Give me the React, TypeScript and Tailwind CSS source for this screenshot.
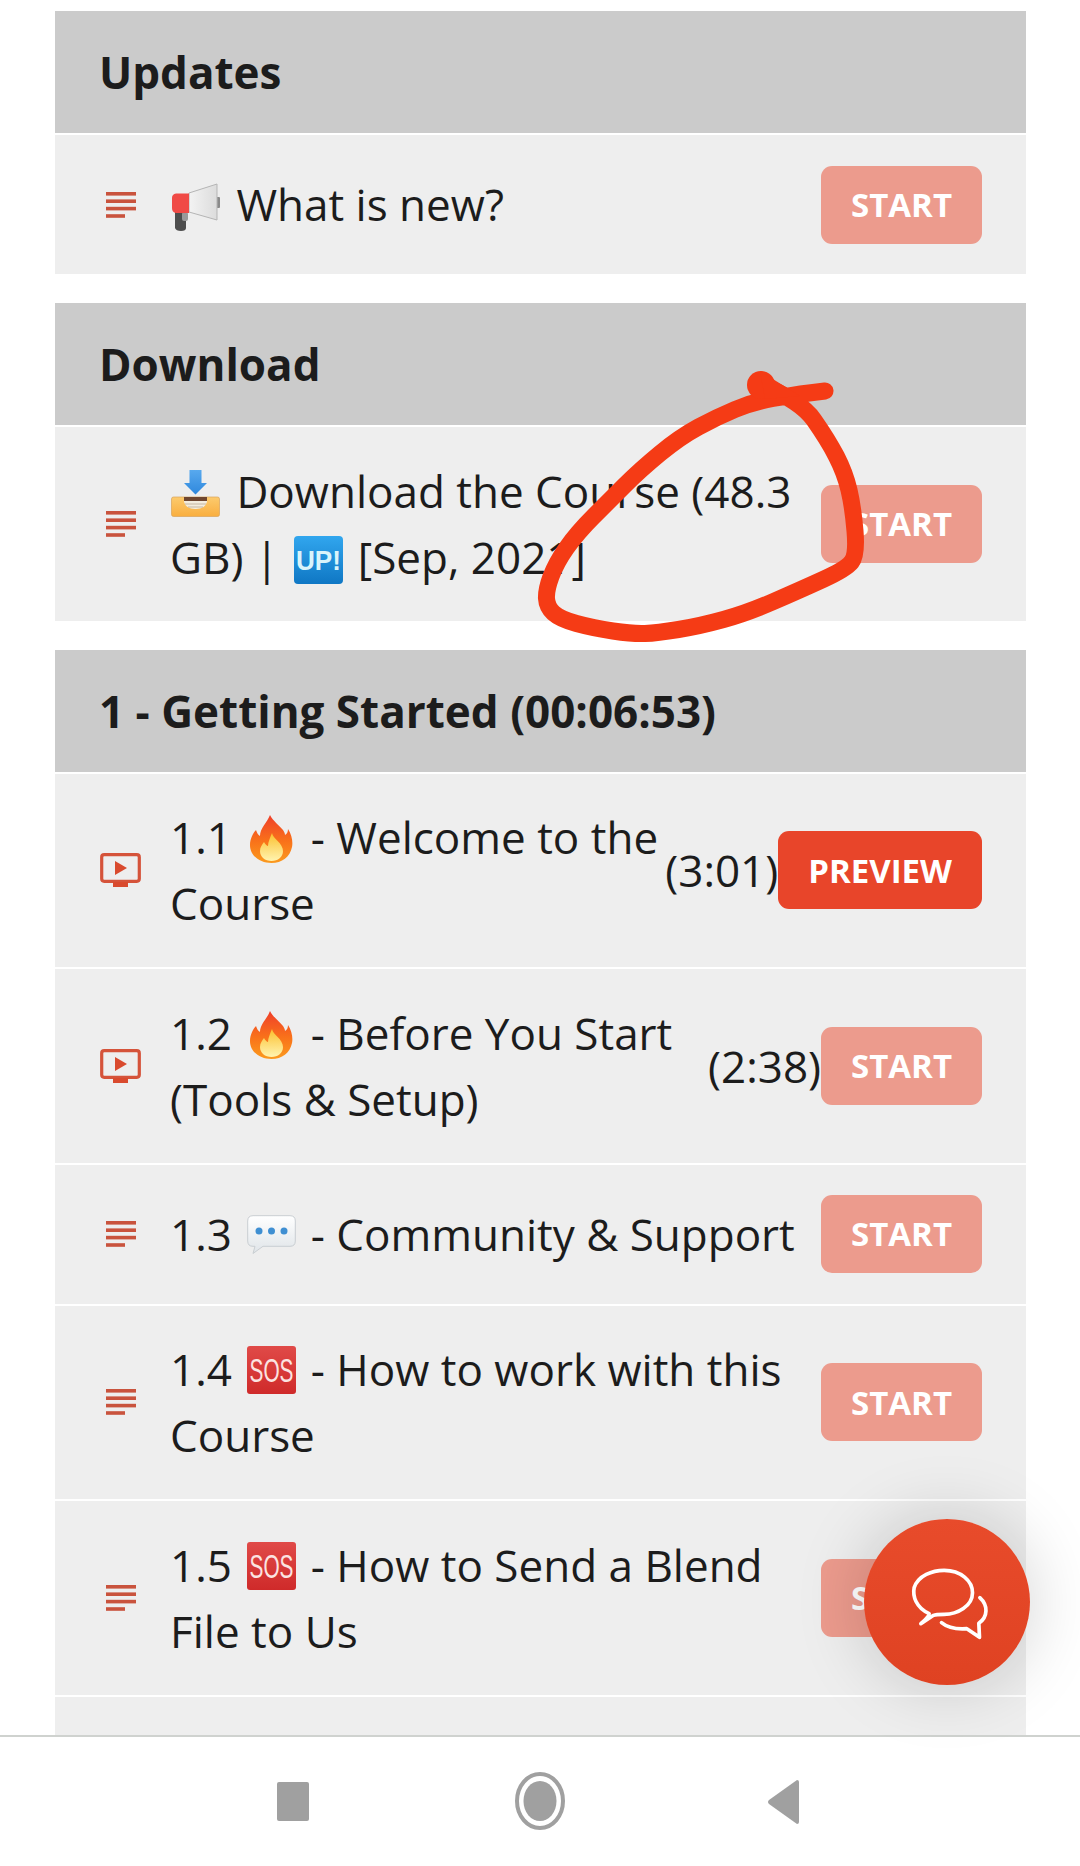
import React from "react";

const FONT = "font-['Open_Sans','Noto_Sans',sans-serif]";

const Megaphone = () => (
  <svg viewBox="0 0 50 48" className="inline-block align-[-10px] w-[50px] h-[48px] ml-[1px] mr-[4px]">
    <defs>
      <linearGradient id="mg" x1="0" y1="0" x2="1" y2="0"><stop offset="0" stopColor="#f3f3f3" /><stop offset="1" stopColor="#dcdcdc" /></linearGradient>
    </defs>
    <path d="M4 27 H16 V34 L15 36 V45 Q15 48 10 48 Q5 48 4 45 Z" fill="#4d4d4d" />
    <rect x="11" y="29" width="6" height="9" rx="2" fill="#9a9a9a" />
    <rect x="45" y="14" width="4" height="11" rx="1" fill="#8a8a8a" />
    <path d="M18 10 L46 1 V37 L18 29 Z" fill="url(#mg)" stroke="#b5b5b5" strokeWidth="1" />
    <path d="M5 10.5 H18 V30 H5 Q1 29.5 1 25 V15 Q1 11 5 10.5 Z" fill="#f04a46" />
  </svg>
);

const Tray = () => (
  <svg viewBox="0 0 49 47" className="inline-block align-[-9px] w-[49px] h-[47px] ml-[1px] mr-[5px]">
    <defs>
      <linearGradient id="tr" x1="0" y1="0" x2="0" y2="1"><stop offset="0" stopColor="#fccb6e" /><stop offset="1" stopColor="#f9ae3f" /></linearGradient>
      <linearGradient id="ar" x1="0" y1="0" x2="0" y2="1"><stop offset="0" stopColor="#58a9ee" /><stop offset="1" stopColor="#2f88dd" /></linearGradient>
    </defs>
    <rect x="0.5" y="27" width="48" height="19.5" rx="2" fill="url(#tr)" stroke="#d9a45a" strokeWidth="0.7" />
    <path d="M13 27 H36 V32 Q34 39 25 39 H24 Q15 39 13 32 Z" fill="#f3ecdd" />
    <path d="M13 27 H36 V31 H13 Z" fill="#6e4630" />
    <path d="M14 34 H35 M17 37 H32" stroke="#b9aa96" strokeWidth="0.8" />
    <path d="M18.5 0 H30.5 V13 H36 L24.5 24.5 L13 13 H18.5 Z" fill="url(#ar)" />
  </svg>
);

const Up = () => (
  <svg viewBox="0 0 49 48" className="inline-block align-[-10px] w-[49px] h-[48px] ml-[4px] mr-[3px]">
    <defs>
      <linearGradient id="up" x1="0" y1="0" x2="0" y2="1"><stop offset="0" stopColor="#31a6ee" /><stop offset="1" stopColor="#0f77c4" /></linearGradient>
    </defs>
    <rect x="0" y="0" width="49" height="48" rx="4" fill="url(#up)" />
    <text x="2" y="34" fontFamily="'Liberation Sans',sans-serif" fontWeight="700" fontSize="27" fill="#d9f4fb" textLength="45" lengthAdjust="spacingAndGlyphs">UP!</text>
  </svg>
);

const Fire = () => (
  <svg viewBox="0 0 49 48" className="inline-block align-[-9px] w-[49px] h-[48px] ml-[4px] mr-[3px]">
    <defs>
      <linearGradient id="f1" x1="0" y1="0" x2="0" y2="1"><stop offset="0" stopColor="#ef3f2a" /><stop offset="0.55" stopColor="#f9721a" /><stop offset="1" stopColor="#fb9a1e" /></linearGradient>
      <linearGradient id="f2" x1="0" y1="0" x2="0" y2="1"><stop offset="0" stopColor="#fbbf2d" /><stop offset="1" stopColor="#fff4b0" /></linearGradient>
    </defs>
    <path d="M23 0 C26 6 32 10 36 15 C37 17 38 18 38 20 C40 19 41 17 41 14 C45 20 46 27 45 32 C43 42 35 48 24.5 48 C13 48 3 41 3 30 C3 24 6 18 9 15 C10 18 11 20 13 21 C13 13 20 8 23 0 Z" fill="url(#f1)" />
    <path d="M25 18 C26 24 36 28 36 36 C36 42 31 46 24.5 46 C18 46 13 42 13 36 C13 32 15 30 17 27 C18 29 20 31 21 31 C21 27 23 23 25 18 Z" fill="url(#f2)" />
  </svg>
);

const Bubble = () => (
  <svg viewBox="0 0 49 40" className="inline-block align-[-4px] w-[49px] h-[40px] ml-[4px] mr-[3px]">
    <defs>
      <linearGradient id="bb" x1="0" y1="0" x2="0" y2="1"><stop offset="0" stopColor="#ffffff" /><stop offset="1" stopColor="#dfe4e8" /></linearGradient>
    </defs>
    <path d="M6 0.7 H43 Q48.3 0.7 48.3 6 V26 Q48.3 31.3 43 31.3 H16 L6 38.5 L8 31.3 H6 Q0.7 31.3 0.7 26 V6 Q0.7 0.7 6 0.7 Z" fill="url(#bb)" stroke="#c9ced2" strokeWidth="1" />
    <circle cx="12" cy="16" r="3.5" fill="#3f8fd2" />
    <circle cx="24.5" cy="16" r="3.5" fill="#3f8fd2" />
    <circle cx="37" cy="16" r="3.5" fill="#3f8fd2" />
  </svg>
);

const Sos = () => (
  <svg viewBox="0 0 49 48" className="inline-block align-[-8px] w-[49px] h-[48px] ml-[4px] mr-[3px]">
    <defs>
      <linearGradient id="so" x1="0" y1="0" x2="0" y2="1"><stop offset="0" stopColor="#e04a48" /><stop offset="1" stopColor="#cf2a2a" /></linearGradient>
    </defs>
    <rect width="49" height="48" rx="3" fill="url(#so)" />
    <text x="2.5" y="36" fontFamily="'Liberation Sans',sans-serif" fontWeight="400" fontSize="33" fill="#fbe3e1" textLength="44" lengthAdjust="spacingAndGlyphs">SOS</text>
  </svg>
);

const ListIcon = () => (
  <svg viewBox="0 0 30 26" className="w-[30px] h-[26px]" fill="#c9533d">
    <rect x="0" y="0" width="30" height="3.6" />
    <rect x="0" y="7.4" width="30" height="3.6" />
    <rect x="0" y="14.8" width="30" height="3.6" />
    <rect x="0" y="22.2" width="19" height="3.6" />
  </svg>
);

const VideoIcon = () => (
  <svg viewBox="0 0 41 34" className="w-[41px] h-[34px]">
    <rect x="1.7" y="1.7" width="37.6" height="26.6" rx="2.5" fill="none" stroke="#d5533a" strokeWidth="3.2" />
    <path d="M15 8 L27 15 L15 22 Z" fill="#d94a2e" />
    <rect x="13" y="29" width="15" height="5" fill="#d94a2e" />
  </svg>
);

const Btn = ({ label, active }: { label: string; active?: boolean }) => (
  <div className={`shrink-0 h-[78px] px-[30px] rounded-[11px] flex items-center text-[33px] font-bold text-white ${active ? "bg-[#e8452a]" : "bg-[#ec9b8d]"}`}>
    {label}
  </div>
);

const Row = ({ video, time, active, children }: { video?: boolean; time?: string; active?: boolean; children: React.ReactNode }) => (
  <div className="flex items-center bg-[#eeeeee] pl-[45px] pr-[44px] py-[30.5px]">
    <div className="shrink-0 w-[41px] mr-[29px] flex justify-center">{video ? <VideoIcon /> : <ListIcon />}</div>
    <div className="flex-1 min-w-0 text-[44px] leading-[66.25px]">{children}</div>
    {time && <div className="shrink-0 text-[44px] leading-[66.25px] whitespace-nowrap">{time}</div>}
    <Btn label={active ? "PREVIEW" : "START"} active={active} />
  </div>
);

const Section = ({ title, children }: { title: string; children: React.ReactNode }) => (
  <section className="flex flex-col gap-[2px]">
    <h2 className="h-[122px] bg-[#cbcbcb] pl-[44px] flex items-center text-[44px] font-bold">{title}</h2>
    {children}
  </section>
);

const Scribble = () => {
  const p: [number, number][] = [[757, 383], [800, 400], [828, 440], [845, 473], [853, 507], [857, 555], [846, 569], [800, 590], [747, 613], [700, 626], [657, 633], [633, 634], [593, 628], [560, 619], [547, 607], [546, 590], [556, 563], [577, 533], [610, 500], [640, 470], [680, 437], [717, 417], [753, 402], [793, 395], [825, 391]];
  let d = `M${p[0][0]} ${p[0][1]}`;
  for (let i = 1; i < p.length - 1; i++) {
    d += ` Q${p[i][0]} ${p[i][1]} ${(p[i][0] + p[i + 1][0]) / 2} ${(p[i][1] + p[i + 1][1]) / 2}`;
  }
  d += ` L${p[p.length - 1][0]} ${p[p.length - 1][1]}`;
  return (
    <svg viewBox="0 0 1080 1866" className="absolute inset-0 w-[1080px] h-[1866px] pointer-events-none">
      <path d={d} fill="none" stroke="#f53b15" strokeWidth="17" strokeLinecap="round" strokeLinejoin="round" />
      <circle cx="761" cy="385" r="14" fill="#f53b15" />
      <path d="M760 371 L800 396 L765 399 Z" fill="#f53b15" />
    </svg>
  );
};

const Fab = () => (
  <div className="absolute left-[864px] top-[1519px] w-[166px] h-[166px] rounded-full bg-gradient-to-b from-[#e84b2b] to-[#df4222] shadow-[0_0_70px_rgba(0,0,0,0.18)] flex items-center justify-center">
    <svg viewBox="385 260 245 225" className="w-[82px] h-[75px] ml-[6px] mt-[3px]" fill="none" stroke="#fff" strokeWidth="11" strokeLinejoin="round" strokeLinecap="round">
      <path d="M445 403 C405 385 395 350 400 325 C412 288 455 273 490 273 C540 273 575 305 575 340 C575 380 530 405 490 405 C475 405 465 405 458 408 L420 433 C435 420 445 410 445 403 Z" />
      <path d="M597 355 C622 378 622 412 594 432 L596 474 L558 448 C530 450 500 445 482 430" />
    </svg>
  </div>
);

export default function App() {
  return (
    <div className={`relative w-[1080px] h-[1866px] overflow-hidden bg-white text-[#1c1c1c] flex flex-col ${FONT}`}>
      <main className="h-[1735px] overflow-hidden pl-[55px] pr-[54px] pt-[11px] flex flex-col gap-[29px]">
        <Section title="Updates">
          <Row><Megaphone /> What is new?</Row>
        </Section>
        <Section title="Download">
          <Row><Tray /> Download the Course (48.3 GB) | <Up /> [Sep, 2021]</Row>
        </Section>
        <Section title="1 - Getting Started (00:06:53)">
          <Row video time="(3:01)" active>1.1 <Fire /> - Welcome to the Course</Row>
          <Row video time="(2:38)">1.2 <Fire /> - Before You Start (Tools &amp; Setup)</Row>
          <Row>1.3 <Bubble /> - Community &amp; Support</Row>
          <Row>1.4 <Sos /> - How to work with this Course</Row>
          <Row>1.5 <Sos /> - How to Send a Blend File to Us</Row>
          <div className="h-[60px] bg-[#eeeeee]" />
        </Section>
      </main>
      <nav className="flex-1 bg-white border-t-2 border-[#cfd2cf] relative flex items-center">
        <div className="w-[1080px] h-[60px]">
          <svg viewBox="0 0 1080 60" className="w-[1080px] h-[60px]" fill="#a0a0a0">
            <rect x="277" y="10" width="32" height="39" rx="2" />
            <ellipse cx="540" cy="29" rx="23" ry="27" fill="none" stroke="#a0a0a0" strokeWidth="4" />
            <ellipse cx="540" cy="29" rx="16.5" ry="20" />
            <path d="M797 8 Q799 8 799 10 V50 Q799 52 797 52 L769 32 Q767 30 769 28 Z" />
          </svg>
        </div>
      </nav>
      <Scribble />
      <Fab />
    </div>
  );
}
